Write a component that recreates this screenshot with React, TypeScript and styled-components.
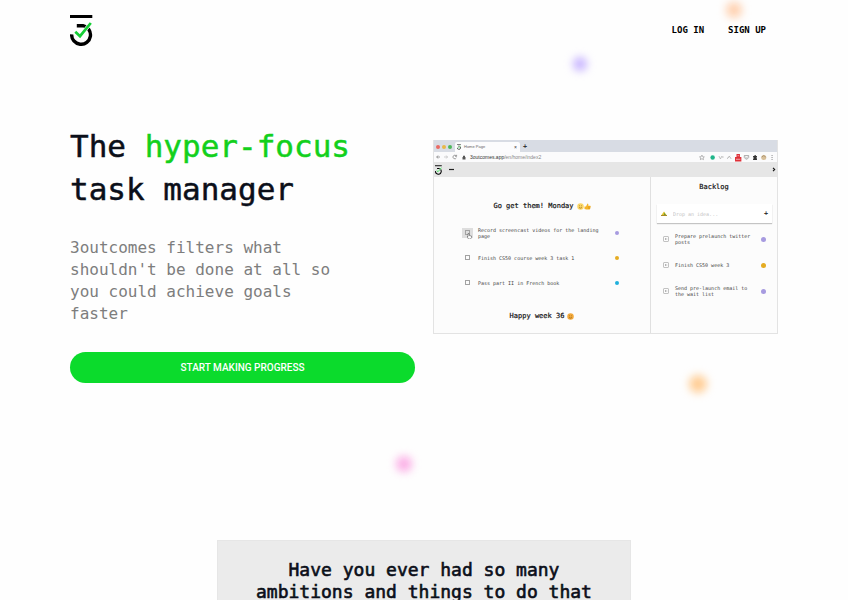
import React from 'react';
import styled, { createGlobalStyle } from 'styled-components';

const GlobalStyle = createGlobalStyle`
  *, *::before, *::after { box-sizing: border-box; }
  html { scrollbar-width: none; }
  body { margin: 0; background: #fefefe; font-family: "DejaVu Sans Mono", monospace; color: #0b0f19; }
  h1, h2, h3, p, ul { margin: 0; padding: 0; font-weight: 400; }
  ul { list-style: none; }
  svg { display: block; flex: none; }
`;

const Page = styled.div`
  position: relative;
  overflow: hidden;
`;

const Blob = styled.span<{ $x: string; $y: number; $size: number; $color: string }>`
  position: absolute;
  left: ${(p) => p.$x};
  top: ${(p) => p.$y}px;
  width: ${(p) => p.$size}px;
  height: ${(p) => p.$size}px;
  border-radius: 50%;
  background: ${(p) => p.$color};
  filter: blur(4px);
  transform: translate(-50%, -50%);
  pointer-events: none;
`;

const Header = styled.header`
  display: flex;
  justify-content: space-between;
  align-items: flex-start;
  padding: 15px 82px 0 70px;
`;

const LogoLink = styled.a`
  display: block;
`;

const Nav = styled.nav`
  display: flex;
  gap: 24px;
  padding-top: 9px;
`;

const NavLink = styled.a`
  font-size: 9px;
  line-height: 12px;
  font-weight: 700;
  color: #000;
  text-decoration: none;
`;

const Hero = styled.main`
  display: grid;
  grid-template-columns: 1fr 1fr;
  gap: 18px;
  align-items: start;
  padding: 79px 70px 0;
`;

const Title = styled.h1`
  font-size: 31px;
  line-height: 43px;
  -webkit-text-stroke: 0.5px currentColor;
`;

const Accent = styled.span`
  color: #12d01c;
`;

const Lead = styled.p`
  margin-top: 26px;
  max-width: 270px;
  font-size: 16px;
  line-height: 22px;
  color: #7d7d7d;
`;

const CallToAction = styled.button`
  display: block;
  width: 100%;
  margin-top: 27px;
  padding: 8px;
  border: 0;
  border-radius: 16px;
  background: #0bdb2c;
  color: #fff;
  font: 500 10px/15px Roboto, sans-serif;
`;

const Browser = styled.section`
  margin-top: 15px;
  border: 1px solid #e3e3e3;
  border-top: 0;
  background: #fcfcfc;
`;

const TabBar = styled.div`
  display: flex;
  align-items: flex-end;
  gap: 7px;
  height: 12px;
  padding-left: 2px;
  background: #d8dce4;
`;

const Lights = styled.div`
  display: flex;
  gap: 2px;
  height: 10px;
  align-items: center;
`;

const Dot = styled.span<{ $color: string; $size: number }>`
  flex: none;
  width: ${(p) => p.$size}px;
  height: ${(p) => p.$size}px;
  border-radius: 50%;
  background: ${(p) => p.$color};
`;

const Tab = styled.div`
  display: flex;
  align-items: center;
  gap: 3px;
  width: 65px;
  height: 10px;
  margin-left: -4px;
  padding: 0 3px 0 2px;
  border-radius: 2px 2px 0 0;
  background: #fcfcfd;
  font: 4px/6px "Liberation Sans", sans-serif;
  color: #666;
`;

const GlyphButton = styled.button`
  margin-left: auto;
  padding: 0;
  border: 0;
  background: none;
  font: 5px/6px "Liberation Sans", sans-serif;
  color: #333;
`;

const NewTab = styled(GlyphButton)`
  margin-left: -4px;
  font-size: 7px;
  line-height: 10px;
  font-weight: 700;
`;

const AddressBar = styled.div`
  display: flex;
  align-items: center;
  gap: 4px;
  height: 10px;
  padding: 0 3px 0 2px;
  background: #fbfbfc;
`;

const Address = styled.span`
  margin-right: auto;
  font: 5px/8px "Liberation Sans", sans-serif;
  color: #888;
`;

const Domain = styled.span`
  color: #333;
`;

const AppBar = styled.div`
  display: flex;
  align-items: center;
  gap: 7px;
  height: 15px;
  padding: 0 1px;
  background: #e6e6e6;
`;

const Spacer = styled.span`
  flex: 1;
`;

const Panels = styled.div`
  display: grid;
  grid-template-columns: 217fr 126fr;
`;

const Today = styled.div`
  padding: 24px 0 12px;
  border-right: 1px solid #e0e0e0;
`;

const Backlog = styled.div`
  padding: 5px 0 12px;
`;

const PanelTitle = styled.h2`
  display: flex;
  justify-content: center;
  align-items: center;
  gap: 3px;
  font-size: 7px;
  line-height: 10px;
  color: #111;
  -webkit-text-stroke: 0.2px currentColor;
`;

const Emojis = styled.span`
  display: flex;
`;

const Tasks = styled.ul<{ $side?: boolean }>`
  margin: ${(p) => (p.$side ? '3px 0 1px' : '9px 0 16px')};
  padding: ${(p) => (p.$side ? '0 11px 0 12px' : '0 31px 0 28px')};
`;

const Task = styled.li<{ $side?: boolean }>`
  display: flex;
  align-items: center;
  height: ${(p) => (p.$side ? 26 : 25)}px;
`;

const TaskLabel = styled.label<{ $side?: boolean }>`
  display: flex;
  align-items: center;
  gap: ${(p) => (p.$side ? 6 : 5)}px;
  flex: 1;
  font-size: 5px;
  line-height: 6px;
  color: #444;
`;

const TaskText = styled.span<{ $side?: boolean }>`
  max-width: ${(p) => (p.$side ? 80 : 124)}px;
`;

const CheckCell = styled.span<{ $hover?: boolean }>`
  display: flex;
  align-items: center;
  justify-content: center;
  position: relative;
  width: 11px;
  height: 10px;
  background: ${(p) => (p.$hover ? '#dedede' : 'transparent')};
`;

const Check = styled.input`
  appearance: none;
  width: 5px;
  height: 5px;
  margin: 0;
  border: 1px solid #a2a2a2;
`;

const Pointer = styled.svg`
  position: absolute;
  left: 5px;
  top: 5px;
`;

const MoveButton = styled.button`
  padding: 0;
  border: 0;
  background: none;
`;

const Idea = styled.form`
  display: flex;
  align-items: center;
  gap: 6px;
  height: 19px;
  margin: 12px 5px 0 6px;
  padding: 0 4px;
  background: #fff;
  box-shadow: 0 1px 1px #c4c4c4;
`;

const IdeaInput = styled.input`
  flex: 1;
  min-width: 0;
  padding: 0;
  border: 0;
  background: none;
  font: 5px/8px "DejaVu Sans Mono", monospace;
  &::placeholder { color: #c4c4c4; opacity: 1; }
`;

const AddButton = styled(GlyphButton)`
  font-size: 7px;
  line-height: 8px;
  font-weight: 700;
`;

const Question = styled.section`
  width: 100%;
  max-width: 414px;
  margin: 157px auto 0;
  padding: 18px 26px;
  border: 1px solid #e6e6e6;
  background: #ebebeb;
`;

const QuestionTitle = styled.h2`
  font-size: 18px;
  line-height: 22px;
  text-align: center;
  -webkit-text-stroke: 0.6px currentColor;
`;

const Logo = ({ width, height }: { width: number; height: number }) => (
  <svg width={width} height={height} viewBox="0 0 23 31" fill="none" aria-hidden="true">
    <path d="M0 1.5H22.3" stroke="#000" strokeWidth="3" />
    <path d="M1.7 19.3A9.4 9.4 0 1 0 13 10.7H6.8" stroke="#000" strokeWidth="3.4" />
    <path d="M5.3 16.7L10 21.2L20.8 8" stroke="#fff" strokeWidth="3.8" />
    <path d="M5.3 16.7L10 21.2L20.8 8" stroke="#16cf36" strokeWidth="2.7" />
  </svg>
);

const Face = ({ color }: { color: string }) => (
  <svg width="7" height="7" viewBox="0 0 14 14" aria-hidden="true">
    <circle cx="7" cy="7" r="6.5" fill={color} />
    <path d="M4 5.5H5.5M8.5 5.5H10M4 9Q7 11.5 10 9" stroke="#8a5a14" strokeWidth="1.2" fill="none" />
  </svg>
);

const Thumb = () => (
  <svg width="7" height="7" viewBox="0 0 14 14" aria-hidden="true">
    <path d="M1 7H4L7 1Q9.5 1 8.5 5.5H12.5Q14 6 13 8L12 12Q11.5 13 10 13H5L1 12Z" fill="#f5b427" />
    <path d="M8 8H13M8 10.5H12.5" stroke="#c98512" strokeWidth=".8" />
  </svg>
);

const NavIcons = () => (
  <svg width="22" height="6" viewBox="0 0 22 6" fill="none" stroke="#777" strokeWidth=".7" aria-hidden="true">
    <path d="M4 3H0.7M2 1.5L.7 3L2 4.5" />
    <path d="M8 3H11.5M10.2 1.5L11.5 3L10.2 4.5" stroke="#bbb" />
    <path d="M20.3 2A1.8 1.8 0 1 0 20.4 3.8M20.6 .8V2.3H19" />
  </svg>
);

const Extensions = () => (
  <svg width="75" height="9" viewBox="0 0 77 9" fill="none" aria-hidden="true">
    <path d="M3 2L3.8 3.7L5.5 3.9L4.2 5L4.6 6.7L3 5.8L1.4 6.7L1.8 5L.5 3.9L2.2 3.7Z" stroke="#777" strokeWidth=".5" />
    <circle cx="14" cy="4.5" r="2.3" fill="#20b58a" />
    <path d="M20.5 3L22 6L23.5 3M24.5 3V5" stroke="#aaa" strokeWidth=".7" />
    <path d="M29 6Q31 1 33 6M30 4.5L32 3" stroke="#aaa" strokeWidth=".7" />
    <path d="M38.5 1H42V4H43.5V8.5H37V4H38.5Z" fill="#df3038" />
    <path d="M38 6.3H42.5M39.5 2.7H41" stroke="#fff" strokeWidth=".6" />
    <path d="M46.5 2.5H51V4.5Q48.8 8 46.5 4.5ZM47.5 4L48.8 5L50 4" stroke="#888" strokeWidth=".7" />
    <path d="M55.5 3H57V2H58.3V3H59.5V4.5H58.8V5.3H59.5V7H55.5V5.5H56.3V4.5H55.5Z" fill="#333" />
    <circle cx="66.5" cy="4.5" r="2.6" fill="#d8c09a" />
    <path d="M64.5 4Q66.5 1 68.5 4" stroke="#a08866" strokeWidth=".8" />
    <path d="M75 2V3M75 4V5M75 6V7" stroke="#666" strokeWidth=".8" />
  </svg>
);

const todayTasks = [
  { text: 'Record screencast videos for the landing page', color: '#a79be0', hover: true },
  { text: 'Finish CS50 course week 3 task 1', color: '#e5ac22' },
  { text: 'Pass part II in French book', color: '#20b0dc' },
];

const backlogTasks = [
  { text: 'Prepare prelaunch twitter posts', color: '#a79be0' },
  { text: 'Finish CS50 week 3', color: '#e5ac22' },
  { text: 'Send pre-launch email to the wait list', color: '#a79be0' },
];

export default function App() {
  return (
    <>
      <GlobalStyle />
      <Page>
        <Blob $x="86.6%" $y={10} $size={16} $color="#ffd0ae" />
        <Blob $x="68.4%" $y={64} $size={14} $color="#c6b2ff" />
        <Blob $x="82.3%" $y={384} $size={18} $color="#ffcd94" />
        <Blob $x="47.7%" $y={464} $size={16} $color="#fbaee6" />
        <Header>
          <LogoLink href="#" aria-label="3outcomes">
            <Logo width={23} height={31} />
          </LogoLink>
          <Nav>
            <NavLink href="#login">LOG IN</NavLink>
            <NavLink href="#signup">SIGN UP</NavLink>
          </Nav>
        </Header>
        <Hero>
          <div>
            <Title>
              The <Accent>hyper-focus</Accent> task manager
            </Title>
            <Lead>3outcomes filters what shouldn't be done at all so you could achieve goals faster</Lead>
            <CallToAction type="button">START MAKING PROGRESS</CallToAction>
          </div>
          <Browser>
            <TabBar>
              <Lights>
                <Dot $color="#ea6a64" $size={4} />
                <Dot $color="#e8b848" $size={4} />
                <Dot $color="#4cb85a" $size={4} />
              </Lights>
              <Tab>
                <Logo width={4} height={6} />
                Home Page
                <GlyphButton type="button" aria-label="Close tab">×</GlyphButton>
              </Tab>
              <NewTab type="button">+</NewTab>
            </TabBar>
            <AddressBar>
              <NavIcons />
              <svg width="4" height="5" viewBox="0 0 4 5" aria-hidden="true">
                <path d="M.5 2H3.5V4.5H.5ZM1 2V1Q2 0 3 1V2" fill="#555" />
              </svg>
              <Address>
                <Domain>3outcomes.app</Domain>/en/home/index2
              </Address>
              <Extensions />
            </AddressBar>
            <AppBar>
              <Logo width={7} height={10} />
              <svg width="5" height="3" viewBox="0 0 5 3" aria-hidden="true">
                <path d="M0 1.5H5" stroke="#222" strokeWidth="1.2" />
              </svg>
              <Spacer />
              <svg width="4" height="5" viewBox="0 0 4 5" fill="none" aria-hidden="true">
                <path d="M1 .8L2.7 2.5L1 4.2" stroke="#111" strokeWidth="1.1" />
              </svg>
            </AppBar>
            <Panels>
              <Today>
                <PanelTitle>
                  Go get them! Monday
                  <Emojis>
                    <Face color="#fbd767" />
                    <Thumb />
                  </Emojis>
                </PanelTitle>
                <Tasks>
                  {todayTasks.map((task) => (
                    <Task key={task.text}>
                      <TaskLabel>
                        <CheckCell $hover={task.hover}>
                          <Check type="checkbox" />
                          {task.hover && (
                            <Pointer width="5" height="6" viewBox="0 0 10 12" aria-hidden="true">
                              <path d="M2 1L4 1V5L9 6V9L7 12H3L0 7L2 7Z" fill="#fff" stroke="#444" />
                            </Pointer>
                          )}
                        </CheckCell>
                        <TaskText>{task.text}</TaskText>
                      </TaskLabel>
                      <Dot $color={task.color} $size={4} />
                    </Task>
                  ))}
                </Tasks>
                <PanelTitle>
                  Happy week 36
                  <Face color="#f2a93b" />
                </PanelTitle>
              </Today>
              <Backlog>
                <PanelTitle>Backlog</PanelTitle>
                <Idea>
                  <svg width="6" height="6" viewBox="0 0 12 12" aria-hidden="true">
                    <path d="M1 8L6 1L11 8Z" fill="#e0c32c" />
                    <path d="M6 3L10 8H6Z" fill="#6c9a3a" />
                    <path d="M0 9H12" stroke="#a8892a" strokeWidth="2" />
                  </svg>
                  <IdeaInput placeholder="Drop an idea..." aria-label="Drop an idea" />
                  <AddButton type="submit">+</AddButton>
                </Idea>
                <Tasks $side>
                  {backlogTasks.map((task) => (
                    <Task $side key={task.text}>
                      <TaskLabel as="div" $side>
                        <MoveButton type="button" aria-label={`Move ${task.text}`}>
                          <svg width="6" height="6" viewBox="0 0 12 12" fill="none" stroke="#888" aria-hidden="true">
                            <rect x="1.5" y="1.5" width="9" height="9" />
                            <path d="M8.5 6H4M6 4L4 6L6 8" />
                          </svg>
                        </MoveButton>
                        <TaskText $side>{task.text}</TaskText>
                      </TaskLabel>
                      <Dot $color={task.color} $size={5} />
                    </Task>
                  ))}
                </Tasks>
              </Backlog>
            </Panels>
          </Browser>
        </Hero>
        <Question>
          <QuestionTitle>Have you ever had so many ambitions and things to do that</QuestionTitle>
        </Question>
      </Page>
    </>
  );
}
